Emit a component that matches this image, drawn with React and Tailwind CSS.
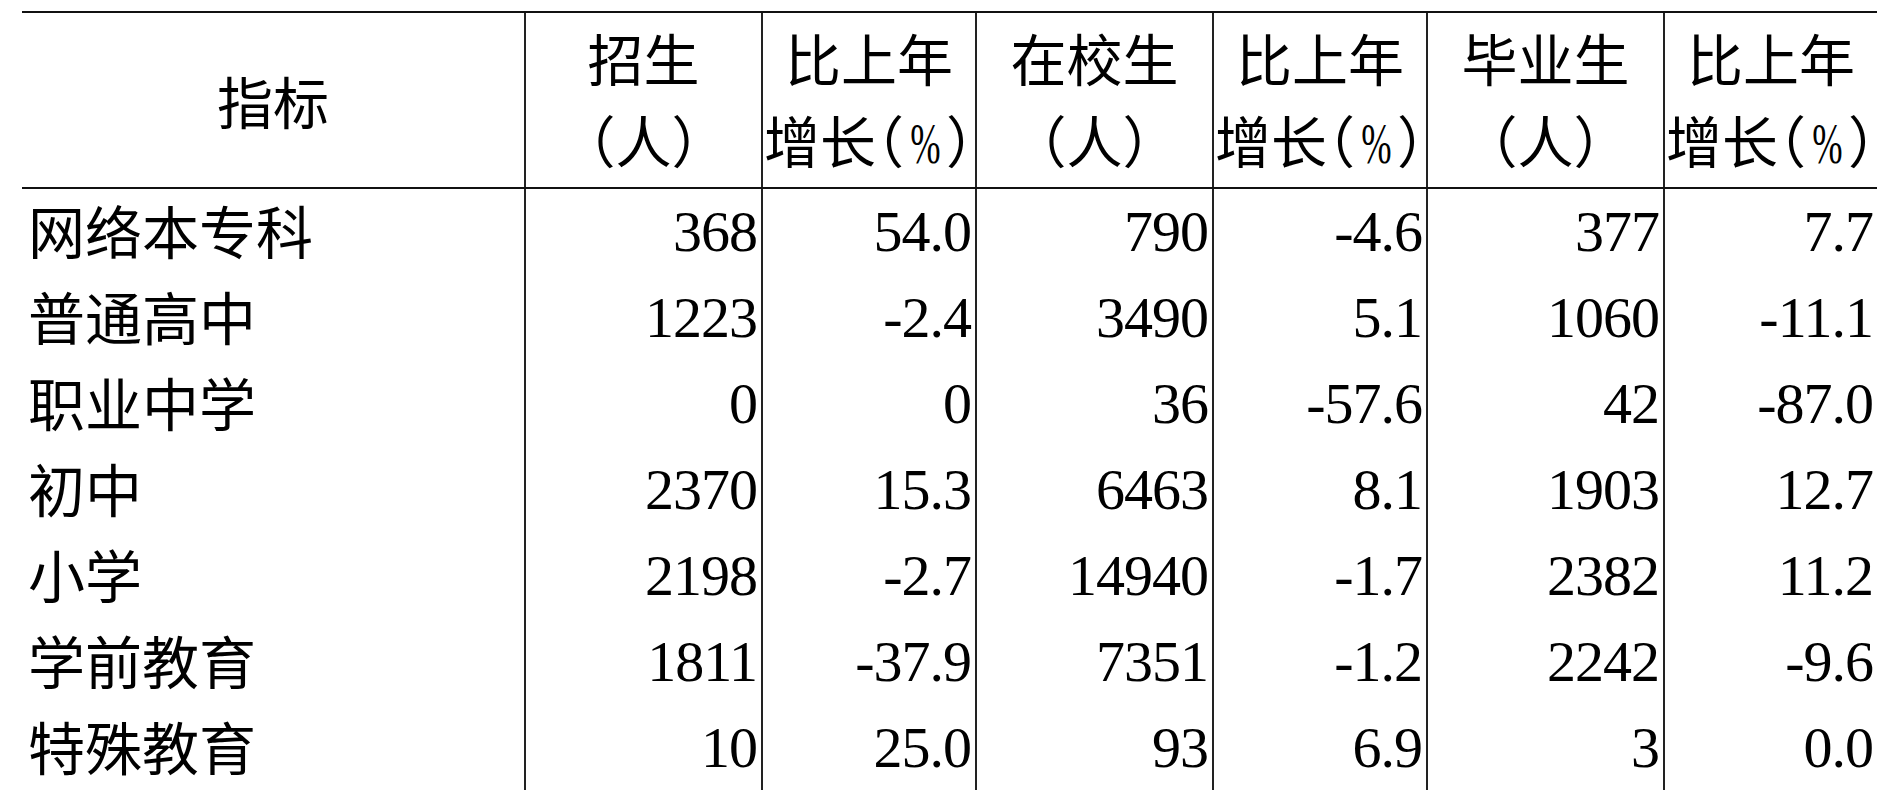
import React from "react";

const grid = "grid grid-cols-[502px_237px_214px_237px_214px_237px_214px]";
const font = { fontFamily: '"Liberation Serif", "Noto Sans CJK SC", serif' };

// 增长（%）: 括号用半宽排版，百分号压窄
function Pct() {
  return (
    <span className="whitespace-nowrap">
      增长
      <span className="[font-feature-settings:'halt']">（</span>
      <span className="inline-flex w-[42px] justify-center">
        <span className="inline-block scale-x-[0.65]">%</span>
      </span>
      <span className="[font-feature-settings:'halt']">）</span>
    </span>
  );
}

const heads = [
  { top: "招生", bottom: "（人）" },
  { top: "比上年", bottom: <Pct /> },
  { top: "在校生", bottom: "（人）" },
  { top: "比上年", bottom: <Pct /> },
  { top: "毕业生", bottom: "（人）" },
  { top: "比上年", bottom: <Pct /> },
];

const rows = [
  ["网络本专科", "368", "54.0", "790", "-4.6", "377", "7.7"],
  ["普通高中", "1223", "-2.4", "3490", "5.1", "1060", "-11.1"],
  ["职业中学", "0", "0", "36", "-57.6", "42", "-87.0"],
  ["初中", "2370", "15.3", "6463", "8.1", "1903", "12.7"],
  ["小学", "2198", "-2.7", "14940", "-1.7", "2382", "11.2"],
  ["学前教育", "1811", "-37.9", "7351", "-1.2", "2242", "-9.6"],
  ["特殊教育", "10", "25.0", "93", "6.9", "3", "0.0"],
];

export default function App() {
  return (
    <div className="h-[790px] overflow-hidden bg-white text-black" style={font}>
      <div className="ml-[22px] mt-[11px] w-[1855px] border-t-2 border-[#111]">
        {/* 表头 */}
        <div className={`${grid} h-[176px] border-b-2 border-[#111]`}>
          <div className="flex items-center justify-center pt-[10px] text-[56px] leading-[82px]">指标</div>
          {heads.map((h, i) => (
            <div key={i} className="border-l-2 border-[#222] pt-[8px] text-center text-[56px] leading-[82px]">
              <div className="whitespace-nowrap">{h.top}</div>
              <div className="whitespace-nowrap">{h.bottom}</div>
            </div>
          ))}
        </div>

        {/* 数据行 */}
        {rows.map((r, i) => (
          <div key={i} className={`${grid} h-[86px]`}>
            <div className="pl-[6px] pt-[3px] text-[57px] leading-[86px] whitespace-nowrap">{r[0]}</div>
            {r.slice(1).map((v, j) => (
              <div key={j} className="border-l-2 border-[#222] pr-[4px] text-right text-[58px] leading-[86px] tracking-[-1px]">
                {v}
              </div>
            ))}
          </div>
        ))}
      </div>
    </div>
  );
}
